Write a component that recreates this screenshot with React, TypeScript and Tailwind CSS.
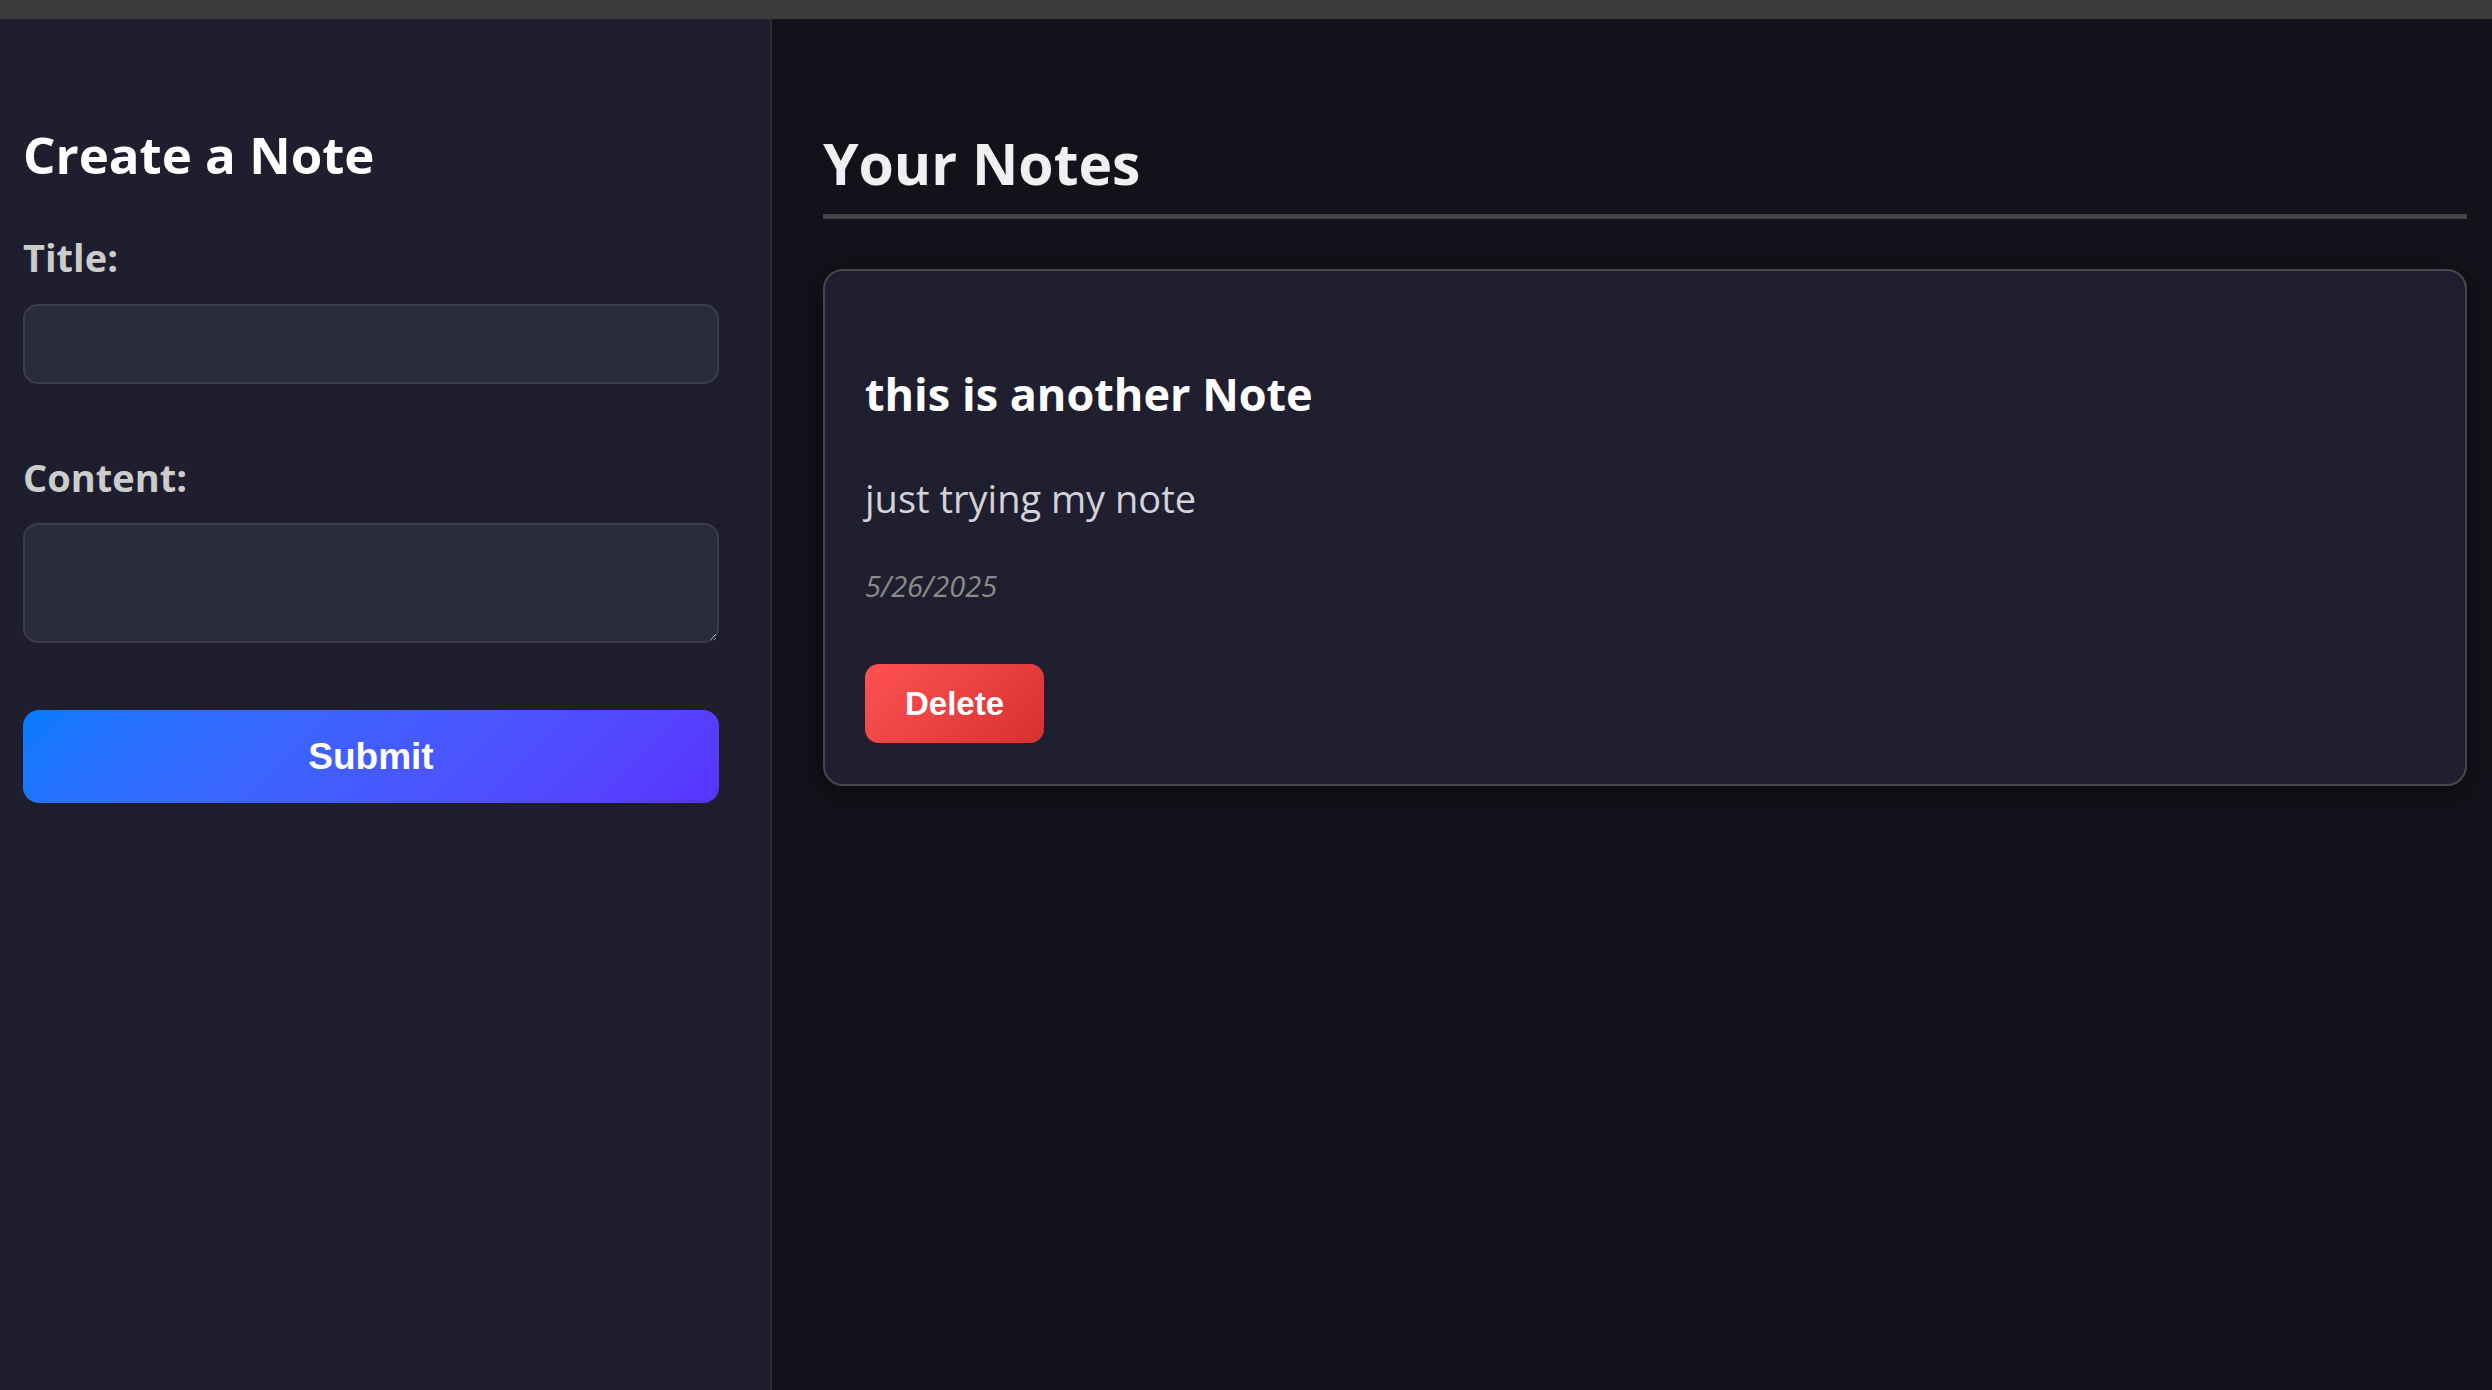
export default function App() {
  return (
    <div className="h-[1390px] w-full flex flex-col bg-[#12121a] font-['Open_Sans',sans-serif] overflow-hidden">
      {/* browser strip */}
      <div className="h-[19px] bg-[#3c3c3c] shrink-0" />

      <div className="flex flex-1 min-h-0">
        {/* Form sidebar */}
        <aside className="w-[772px] shrink-0 bg-[#1e1e2e] border-r-2 border-[#2a2a36] px-[23px] pt-[110px]">
          <h2 className="text-[51px] leading-none font-bold text-white">Create a Note</h2>

          <form className="flex flex-col" onSubmit={(e) => e.preventDefault()}>
            <label className="mt-[58px] text-[38px] leading-none font-bold text-[#cccccc]">Title:</label>
            <input
              type="text"
              className="mt-[28px] w-[696px] h-[80px] rounded-[15px] bg-[#2a2b3d] border-2 border-[#3e3e48] outline-none px-4 text-white text-2xl"
            />

            <label className="mt-[74px] text-[38px] leading-none font-bold text-[#cccccc]">Content:</label>
            <textarea className="mt-[27px] w-[696px] h-[120px] rounded-[15px] bg-[#2a2b3d] border-2 border-[#3e3e48] outline-none px-4 py-3 text-white text-2xl" />

            <button
              type="submit"
              className="mt-[67px] w-[696px] h-[93px] rounded-[16px] bg-linear-135 from-[#007bff] to-[#5a33ff] text-white text-[37px] font-bold font-['Liberation_Sans',Arial,sans-serif]"
            >
              Submit
            </button>
          </form>
        </aside>

        {/* Notes list */}
        <main className="flex-1 pl-[51px] pr-[25px] pt-[116px]">
          <h2 className="text-[57px] leading-none font-bold text-[#f0f0f0] pb-[22px] border-b-[5px] border-[#444444]">
            Your Notes
          </h2>

          <div className="mt-[50px] rounded-[20px] border-2 border-[#47474f] bg-[#1f1f2f] px-[40px] pt-[100px] pb-[41px] shadow-[0_6px_24px_rgba(0,0,0,0.45)]">
            <h3 className="text-[45px] leading-none font-bold text-white">this is another Note</h3>
            <p className="mt-[63px] text-[38px] leading-none text-[#d2d2d8]">just trying my note</p>
            <p className="mt-[54px] text-[29px] leading-none italic text-[#8a8a8a]">5/26/2025</p>
            <button className="mt-[64px] w-[179px] h-[79px] rounded-[14px] bg-linear-135 from-[#ff5252] to-[#d63031] text-white text-[33px] font-bold font-['Liberation_Sans',Arial,sans-serif]">
              Delete
            </button>
          </div>
        </main>
      </div>
    </div>
  );
}
